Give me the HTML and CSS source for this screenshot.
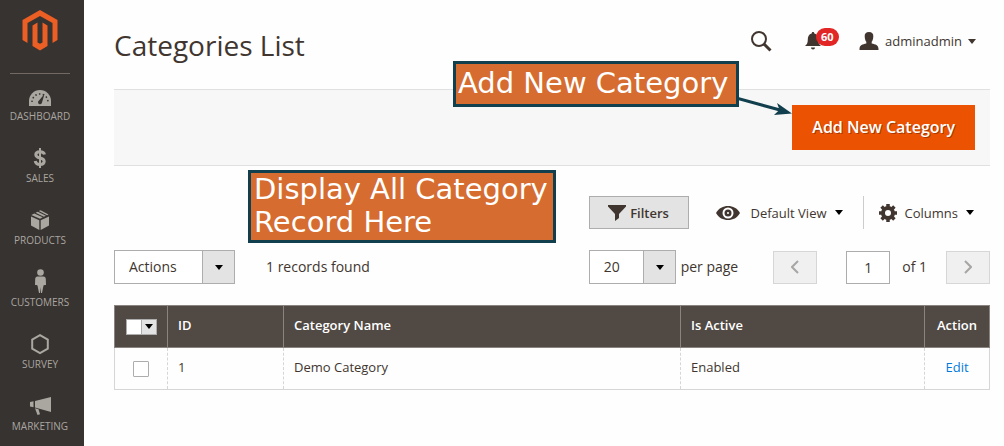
FILE: index.html
```html
<!DOCTYPE html>
<html lang="en">
<head>
    <meta charset="UTF-8">
    <meta name="viewport" content="width=device-width, initial-scale=1.0">
    <title>Categories List</title>
    <link rel="stylesheet" href="styles.css">
</head>
<body>
    <nav class="sidebar">
        <a class="logo" href="#" aria-label="Home">
            <svg width="36" height="42" viewBox="0 0 36 42" fill="#eb5e24">
                <path d="M18 0 35.500 10v20l-5 3V13L18 6 5.500 13v20l-5-3V10z"/>
                <path d="M10.500 15.500l5-3v20l2.500 1.200 2.500-1.200v-20l5 3V36L18 40.500 10.500 36z"/>
            </svg>
        </a>
        <ul class="menu">
            <li><a href="#">
                <svg width="22" height="22" viewBox="0 0 22 22">
                    <path fill="#aaa6a0" d="M0 21v-5a11 11 0 0 1 22 0v5z"/>
                    <path fill="none" stroke="#373330" stroke-width="1.500" stroke-dasharray="1.500 2.300" d="M3 17a8 8 0 0 1 16 0"/>
                    <path fill="#373330" d="M15.500 9 13 17.500a2 2 0 1 1-3-2z"/>
                </svg>
                Dashboard
            </a></li>
            <li><a href="#">
                <svg width="22" height="22" viewBox="0 0 22 22" fill="none" stroke="#aaa6a0" stroke-width="3">
                    <path d="M15.500 7.500C15 5.500 13 4.800 11 4.800c-2.500 0-4.200 1.100-4.200 3 0 4.400 8.400 2 8.400 6.500 0 2-1.800 3.200-4.200 3.200s-4.400-1-4.800-3.500"/>
                    <path stroke-width="2" d="M11 1v20"/>
                </svg>
                Sales
            </a></li>
            <li><a href="#">
                <svg width="22" height="22" viewBox="0 0 22 22" fill="#aaa6a0">
                    <path d="M2 7.500l8.300 3.700v9.800L2 16.500z"/>
                    <path d="M20 7.500l-8.300 3.700v9.800l8.300-4.500z"/>
                    <path d="M2.300 5.900l3-1.500 8.400 3.900-2.700 1.400z"/>
                    <path d="M6.600 3.700l2-1 8.300 4-2 1z"/>
                    <path d="M9.800 2.100 11.500 1.200l8 4.300-1.400.7z"/>
                </svg>
                Products
            </a></li>
            <li><a href="#">
                <svg width="22" height="24" viewBox="0 0 22 24" fill="#aaa6a0">
                    <circle cx="11.500" cy="3.500" r="3.300"/>
                    <path d="M8.500 7.500h6c1.500 0 2.200 1 2.300 2.500l.2 6h-1.500l-1 .5L13 24h-1l-.5-6-.5 6h-1l-1.500-7.500-1-.5H6l.2-6c.1-1.500.8-2.500 2.300-2.500z"/>
                </svg>
                Customers
            </a></li>
            <li><a href="#">
                <svg width="22" height="22" viewBox="0 0 22 22" fill="none" stroke="#aaa6a0" stroke-width="2">
                    <path d="M11 2.200 18.800 6.600v9L11 20l-7.800-4.400v-9z"/>
                </svg>
                Survey
            </a></li>
            <li><a href="#">
                <svg width="22" height="22" viewBox="0 0 22 22" fill="#aaa6a0">
                    <path d="M6 6l16-4v15L6 12.500z"/>
                    <path d="M1 7l3.500-.8v6L1 11.500z"/>
                    <path d="M6 13.200l3.500 1 1.500 5-2.500.8z"/>
                </svg>
                Marketing
            </a></li>
        </ul>
    </nav>

    <main class="page">
        <header class="page-header">
            <h1>Categories List</h1>
            <div class="header-tools">
                <button class="icon-btn" type="button" aria-label="Search">
                    <svg width="22" height="22" viewBox="0 0 22 22" fill="none" stroke="#41362f">
                        <circle cx="9" cy="9" r="7" stroke-width="2"/>
                        <path stroke-width="3" d="M14 14l6.500 6.500"/>
                    </svg>
                </button>
                <button class="icon-btn bell" type="button" aria-label="Notifications">
                    <svg width="16" height="18" viewBox="0 0 16 18" fill="#41362f">
                        <path d="M8 0c1 0 1.300.7 1.300 1.500 3 .8 3.900 3 3.900 6 0 3.500.8 5 2.800 6.500H0c2-1.500 2.800-3 2.800-6.500 0-3 1-5.200 3.900-6C6.700.7 7 0 8 0z"/>
                        <path d="M6 15.500h4c0 1.300-.8 2-2 2s-2-.7-2-2z"/>
                    </svg>
                    <span class="badge">60</span>
                </button>
                <button class="account" type="button">
                    <svg width="20" height="18" viewBox="0 0 20 18" fill="#41362f">
                        <path d="M10 0c3 0 4.500 1.500 4.300 4.500-.1 2.500-.8 4.300-1.600 5.300v1.700c3.700.9 6.800 1.500 6.800 5.500v1H.5v-1c0-4 3.100-4.600 6.800-5.500V9.800c-.8-1-1.500-2.800-1.600-5.300C5.500 1.500 7 0 10 0z"/>
                    </svg>
                    adminadmin
                    <span class="caret"></span>
                </button>
            </div>
        </header>

        <div class="page-actions">
            <button class="primary" type="button">Add New Category</button>
            <div class="callout callout-add">
                Add New Category
                <svg class="arrow" width="56" height="30" viewBox="0 0 56 30">
                    <path stroke="#123f4d" stroke-width="3" d="M0 6 44 18"/>
                    <path fill="#123f4d" d="M56 21.500 41 11l2.500 6.800L38 23z"/>
                </svg>
            </div>
        </div>

        <section class="grid">
            <div class="callout callout-list">Display All Category<br>Record Here</div>

            <div class="grid-views">
                <button class="filters" type="button">
                    <svg width="18" height="16" viewBox="0 0 18 16" fill="#41362f">
                        <path d="M0 0h18v1.500L11 9v4l-4 3V9L0 1.500z"/>
                    </svg>
                    Filters
                </button>
                <button class="view" type="button">
                    <svg width="24" height="16" viewBox="0 0 24 16">
                        <path fill="#41362f" d="M0 8c3-5 7-7 12-7s9 2 12 7c-3 5-7 7-12 7S3 13 0 8z"/>
                        <circle cx="12" cy="8" r="5.500" fill="#fff"/>
                        <circle cx="12" cy="8" r="3.500" fill="#41362f"/>
                        <circle cx="12" cy="8" r="1" fill="#fff"/>
                    </svg>
                    Default View
                    <span class="caret"></span>
                </button>
                <button class="columns" type="button">
                    <svg width="18" height="18" viewBox="0 0 18 18" fill="none" stroke="#41362f">
                        <circle cx="9" cy="9" r="5" stroke-width="4"/>
                        <path stroke-width="3.500" d="M9 0v3M9 15v3M0 9h3M15 9h3M2.600 2.600l2.200 2.200M13.200 13.200l2.200 2.200M2.600 15.400l2.200-2.200M13.200 4.800l2.200-2.200"/>
                    </svg>
                    Columns
                    <span class="caret"></span>
                </button>
            </div>

            <div class="grid-toolbar">
                <span class="select select-actions">
                    <select aria-label="Actions">
                        <option>Actions</option>
                    </select>
                </span>
                <span class="found">1 records found</span>
                <div class="pager">
                    <span class="select select-size">
                        <select id="page-size">
                            <option>20</option>
                        </select>
                    </span>
                    <label class="per-page" for="page-size">per page</label>
                    <button class="step" type="button" aria-label="Previous page" disabled>
                        <svg width="8" height="14" viewBox="0 0 8 14"><path d="M7 1 1 7l6 6"/></svg>
                    </button>
                    <input class="current" id="current-page" type="text" value="1">
                    <label class="total" for="current-page">of 1</label>
                    <button class="step" type="button" aria-label="Next page" disabled>
                        <svg width="8" height="14" viewBox="0 0 8 14"><path d="M1 1l6 6-6 6"/></svg>
                    </button>
                </div>
            </div>

            <table class="data">
                <thead>
                    <tr>
                        <th class="col-check">
                            <span class="multicheck">
                                <input type="checkbox" aria-label="Select all">
                                <button type="button" aria-label="Selection options"><span class="caret"></span></button>
                            </span>
                        </th>
                        <th class="col-id">ID</th>
                        <th>Category Name</th>
                        <th class="col-active">Is Active</th>
                        <th class="col-action">Action</th>
                    </tr>
                </thead>
                <tbody>
                    <tr>
                        <td class="col-check"><input type="checkbox" aria-label="Select Demo Category"></td>
                        <td>1</td>
                        <td>Demo Category</td>
                        <td>Enabled</td>
                        <td class="col-action"><a href="#">Edit</a></td>
                    </tr>
                </tbody>
            </table>
        </section>
    </main>
</body>
</html>
```

FILE: styles.css
```css
* {
    box-sizing: border-box;
}
body {
    font-family: 'Open Sans', 'Liberation Sans', sans-serif;
    font-size: 13px;
    line-height: 18px;
    color: #41362f;
    background-color: #fefefe;
    margin: 0;
    display: flex;
    min-height: 100vh;
}
button, input, select {
    font: inherit;
    color: inherit;
    margin: 0;
    padding: 0;
    border: 0;
    border-radius: 0;
    background: none;
    appearance: none;
}
svg {
    display: block;
    flex: none;
}
a {
    color: #007bdb;
    text-decoration: none;
}

/* Sidebar */
.sidebar {
    flex: none;
    width: 84px;
    background-color: #373330;
}
.logo {
    display: flex;
    justify-content: center;
    height: 74px;
    margin: 0 14px 0 10px;
    padding-top: 10px;
    border-bottom: 1px solid #736963;
}
.menu {
    list-style: none;
    margin: 0;
    padding: 11px 4px 0 0;
}
.menu a {
    display: flex;
    flex-direction: column;
    justify-content: flex-end;
    align-items: center;
    height: 38px;
    margin-bottom: 24px;
    font-size: 10px;
    line-height: 14px;
    text-transform: uppercase;
    color: #aaa6a0;
}
.menu svg {
    margin-bottom: 2px;
}

/* Header */
.page {
    flex: 1;
    min-width: 0;
    padding: 0 14px 0 30px;
}
.page-header {
    display: flex;
    justify-content: space-between;
    height: 89px;
    padding: 25px 14px 0 0;
}
h1 {
    font-size: 28px;
    font-weight: 400;
    line-height: 40px;
    margin: 0;
}
.header-tools {
    display: flex;
    align-items: center;
    height: 32px;
}
.icon-btn {
    position: relative;
    margin-right: 33px;
}
.bell {
    margin-right: 38px;
}
.badge {
    position: absolute;
    left: 11px;
    top: -4px;
    padding: 0 5px;
    border-radius: 9px;
    background-color: #e22626;
    color: #fff;
    font-size: 11px;
    font-weight: 700;
    line-height: 18px;
}
.account {
    display: flex;
    align-items: center;
    gap: 6px;
}
.caret {
    width: 8px;
    border: 4px solid transparent;
    border-top: 5px solid #000;
    border-bottom: 0;
}
.account .caret {
    border-top-color: #41362f;
}

/* Page actions */
.page-actions {
    position: relative;
    display: flex;
    justify-content: flex-end;
    padding: 15px;
    background-color: #f7f7f7;
    border-top: 1px solid #e0e0e0;
    border-bottom: 1px solid #e0e0e0;
}
.primary {
    height: 45px;
    padding: 0 20px 2px;
    background-color: #eb5202;
    color: #fff;
    font-size: 16px;
    font-weight: 600;
    text-shadow: 1px 1px 0 rgba(0,0,0,0.3);
}
.callout {
    position: absolute;
    border: 3px solid #123f4d;
    background-color: #d66c2f;
    color: #fff;
    font-family: 'DejaVu Sans', sans-serif;
    font-size: 29px;
    line-height: 34px;
    white-space: nowrap;
}
.callout-add {
    right: 251px;
    top: -29px;
    width: 286px;
    padding: 2px 2px 4px;
}
.arrow {
    position: absolute;
    left: 100%;
    top: 28px;
}
.callout-list {
    left: 134px;
    top: 4px;
    width: 308px;
    padding: 0 3px 1px;
    line-height: 33px;
}

/* Grid */
.grid {
    position: relative;
    padding-top: 30px;
}
.grid-views {
    display: flex;
    justify-content: flex-end;
    padding-right: 16px;
}
.filters {
    display: flex;
    align-items: center;
    justify-content: center;
    gap: 4px;
    width: 100px;
    height: 33px;
    margin-right: 27px;
    background-color: #e3e3e3;
    border: 1px solid #adadad;
    font-weight: 600;
}
.view, .columns {
    display: flex;
    align-items: center;
    gap: 8px;
}
.view {
    padding-right: 20px;
    border-right: 1px solid #ccc;
}
.view svg {
    margin-right: 3px;
}
.columns {
    padding-left: 15px;
}
.grid-toolbar {
    display: flex;
    align-items: center;
    margin: 21px 0;
    font-size: 14px;
}
.select {
    position: relative;
    display: flex;
}
.select select {
    width: 100%;
    height: 34px;
    padding: 0 14px;
    border: 1px solid #adadad;
    background: linear-gradient(#adadad, #adadad) right 31px top / 1px 100% no-repeat, linear-gradient(#e3e3e3, #e3e3e3) right / 31px 100% no-repeat #fff;
}
.select::after {
    content: '';
    position: absolute;
    right: 12px;
    top: 15px;
    border: 4px solid transparent;
    border-top: 5px solid #000;
    border-bottom: 0;
    pointer-events: none;
}
.select-actions {
    width: 121px;
}
.select-size {
    width: 87px;
}
.found {
    margin-left: 31px;
}
.pager {
    display: flex;
    align-items: center;
    margin-left: auto;
}
.per-page {
    margin: 0 35px 0 5px;
}
.step {
    display: flex;
    align-items: center;
    justify-content: center;
    width: 44px;
    height: 33px;
    background-color: #f0f0f0;
    border: 1px solid #d6d6d6;
}
.step svg {
    fill: none;
    stroke: #a8a6a4;
    stroke-width: 2;
}
.current {
    width: 44px;
    height: 33px;
    margin: 0 12px 0 29px;
    border: 1px solid #adadad;
    background-color: #fff;
    text-align: center;
}
.total {
    margin-right: 19px;
}

/* Table */
.data {
    width: 100%;
    table-layout: fixed;
    border-collapse: collapse;
}
.data th, .data td {
    height: 42px;
    padding: 0 10px 4px;
    text-align: left;
}
.data th {
    border: 1px solid #8a837f;
    background-color: #514943;
    color: #fff;
    font-weight: 600;
}
.data td {
    border: 1px dashed #d6d6d6;
    border-bottom-style: solid;
}
.data td:first-child {
    border-left-style: solid;
}
.data td:last-child {
    border-right-style: solid;
}
.data .col-check {
    width: 53px;
    padding: 0;
}
.data .col-id {
    width: 116px;
}
.data th.col-active {
    width: 244px;
}
.data .col-action {
    width: 65px;
    padding-left: 0;
    padding-right: 0;
    text-align: center;
}
.data td input {
    display: block;
    width: 16px;
    height: 16px;
    margin: 0 auto;
    border: 1px solid #adadad;
    border-radius: 1px;
    background-color: #fff;
}
.multicheck {
    display: flex;
    width: 31px;
    height: 16px;
    margin: 0 auto;
    border: 1px solid #adadad;
    background-color: #fff;
}
.multicheck input {
    width: 14px;
}
.multicheck button {
    display: flex;
    flex: 1;
    align-items: center;
    justify-content: center;
    border-left: 1px solid #adadad;
    background-color: #e3e3e3;
}
```
